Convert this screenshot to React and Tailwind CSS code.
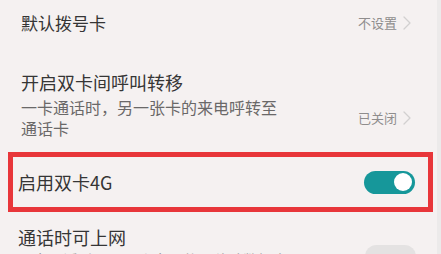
export default function App() {
  const font = { fontFamily: '"Noto Sans CJK SC", "Noto Sans", sans-serif' };

  return (
    <div
      className="w-[441px] h-[254px] overflow-hidden bg-[#f5f1f1] border-r-[4px] border-[#eceaea] relative"
      style={font}>
      {/* 默认拨号卡 */}
      <div className="h-[45px] flex items-center justify-between pl-[21px] pr-[26px]">
        <span className="text-[17px] leading-[24px] text-[#353535]">默认拨号卡</span>
        <div className="flex items-center gap-[6px]">
          <span className="text-[13px] text-[#8f8d8d]">不设置</span>
          <Chevron />
        </div>
      </div>

      {/* 开启双卡间呼叫转移 */}
      <div className="flex items-center justify-between pl-[21px] pr-[26px] pt-[25px] pb-[2px] h-[107px]">
        <div className="self-start">
          <div className="text-[18px] leading-[24px] text-[#353535]">开启双卡间呼叫转移</div>
          <div className="mt-[3px] w-[258px] text-[16px] leading-[21px] text-[#6a6868]">
            一卡通话时，另一张卡的来电呼转至通话卡
          </div>
        </div>
        <div className="flex items-center gap-[6px] mt-[16px]">
          <span className="text-[13px] text-[#8f8d8d]">已关闭</span>
          <Chevron />
        </div>
      </div>

      {/* 启用双卡4G */}
      <div className="ml-[8px] mr-[4px] h-[60px] border-[5px] border-[#e8363a] flex items-center justify-between pl-[5px] pr-[13px]">
        <span className="text-[18px] leading-[24px] text-[#353535]">启用双卡4G</span>
        <div className="w-[51px] h-[23px] rounded-full bg-[#16979a] flex items-center justify-end pr-[3px]">
          <div className="w-[18px] h-[18px] rounded-full bg-white" />
        </div>
      </div>

      {/* 通话时可上网 */}
      <div className="flex justify-between pl-[18px] pr-[21px] pt-[13px]">
        <div>
          <div className="text-[18px] leading-[24px] text-[#353535]">通话时可上网</div>
          <div className="text-[15px] leading-[21px] text-[#9a9898]">
            一卡通话时，另一张卡可使用移动数据上网
          </div>
        </div>
        <div className="w-[51px] h-[23px] rounded-full bg-[#e4e2e2] mt-[20px]" />
      </div>
    </div>
  );
}

function Chevron() {
  return (
    <svg width="8" height="14" viewBox="0 0 8 14" fill="none">
      <path d="M1 1l6 6-6 6" stroke="#d2d0d0" strokeWidth="1.3" strokeLinecap="round" strokeLinejoin="round" />
    </svg>
  );
}
